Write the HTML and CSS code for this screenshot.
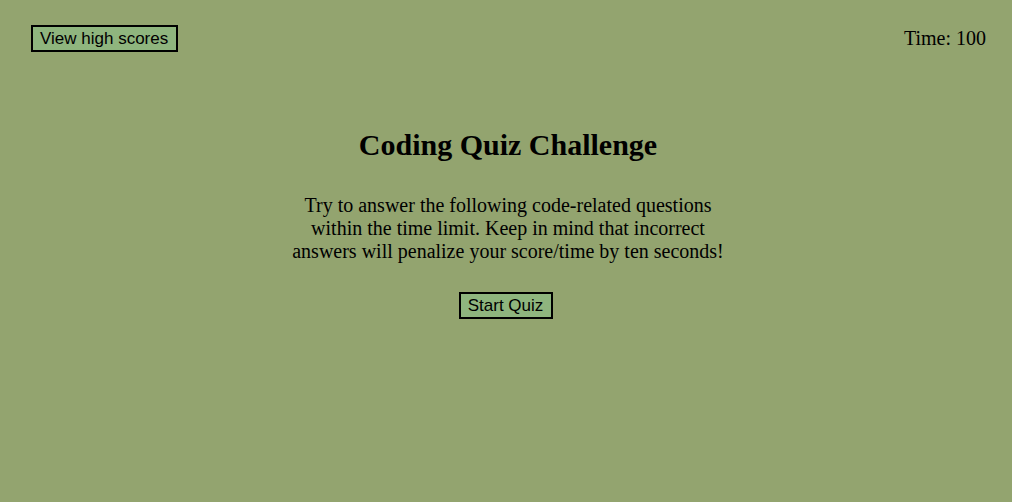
FILE: index.html
```html
<!DOCTYPE html>
<html>
<head>
<meta charset="utf-8">
<link rel="stylesheet" href="styles.css">
</head>
<body>
<header class="top">
  <button class="btn">View high scores</button>
  <div class="timer">Time: 100</div>
</header>
<main class="intro">
  <h1 class="title">Coding Quiz Challenge</h1>
  <p class="desc">Try to answer the following code-related questions within the time limit. Keep in mind that incorrect answers will penalize your score/time by ten seconds!</p>
  <button class="btn">Start Quiz</button>
</main>
</body>
</html>
```
FILE: styles.css
```css
html, body {
  margin: 0;
  padding: 0;
  height: 100%;
}
body {
  background: #93a46f;
  font-family: "Liberation Serif", "Times New Roman", serif;
  color: #000;
}
.top {
  display: flex;
  justify-content: space-between;
  align-items: flex-start;
  padding: 25px 26px 0 31px;
}
.btn {
  font-family: "Liberation Sans", Arial, sans-serif;
  font-size: 17px;
  background: #8fb57e;
  border: 2px solid #000;
  padding: 2px 8px 2px 7px;
  color: #000;
  line-height: 19px;
  margin: 0;
}
.timer {
  font-size: 20px;
  line-height: 23px;
  padding-top: 2px;
}
.intro {
  display: flex;
  flex-direction: column;
  align-items: center;
  margin-top: 75px;
}
.title {
  font-size: 30px;
  margin: 0 0 0 4px;
  line-height: 36px;
}
.desc {
  font-size: 20px;
  line-height: 23px;
  width: 440px;
  text-align: center;
  margin: 31px 0 29px 4px;
}
```
